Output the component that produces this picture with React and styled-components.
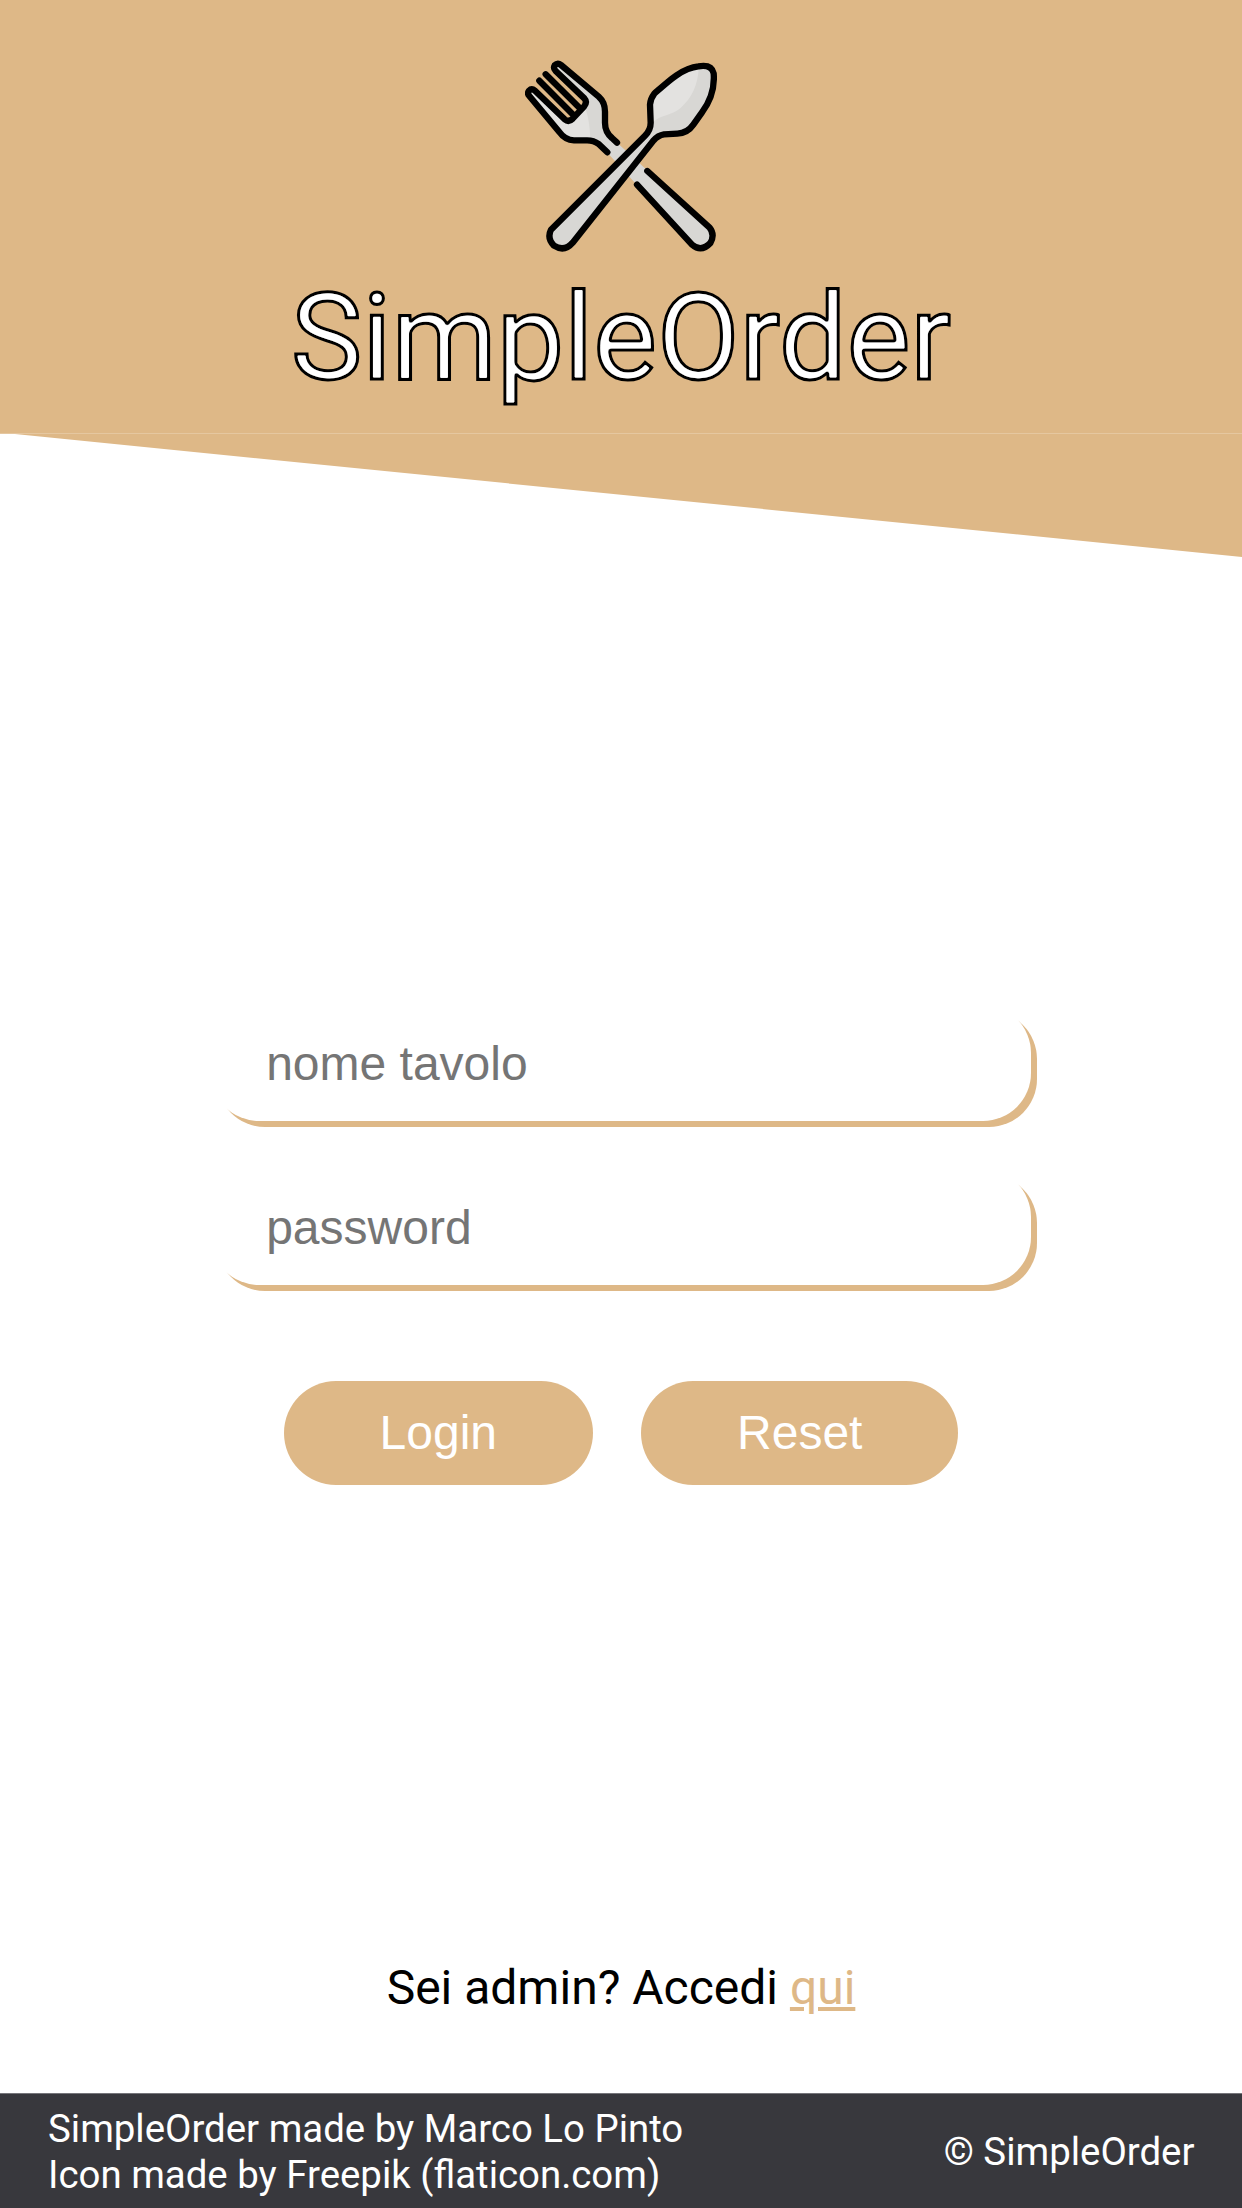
import React from "react";
import styled, { createGlobalStyle } from "styled-components";

const tan = "#deb887";

const GlobalStyle = createGlobalStyle`
  *, *::before, *::after { box-sizing: border-box; }
  body { margin: 0; background: #fff; font-family: Roboto, sans-serif; }
`;

const Page = styled.div`
  display: flex;
  flex-direction: column;
  width: 100%;
  min-height: 2208px;
`;

const Header = styled.header`
  display: flex;
  flex-direction: column;
  align-items: center;
  height: 434px;
  padding-top: 60px;
  background: linear-gradient(${tan} 433px, #e5c7a0 433px);
`;

const Logo = styled.svg`
  display: block;
  width: 192px;
  height: 192px;
`;

const Title = styled.h1`
  margin: 16px 0 0;
  font-size: 120px;
  font-weight: 400;
  line-height: 141px;
  color: #fff;
  -webkit-text-stroke: 3px #000;
  paint-order: stroke fill;
  filter: url(#title-outline);
`;

const FilterDefs = styled.svg`
  position: absolute;
  width: 0;
  height: 0;
`;

const Slant = styled.div`
  height: 123px;
  background: ${tan};
  clip-path: polygon(0 -1.5px, 100% -1.5px, 100% 100%);
`;

const Main = styled.main`
  flex: 1;
  display: flex;
  flex-direction: column;
  align-items: center;
  padding-top: 448px;
`;

const Form = styled.form`
  display: flex;
  flex-direction: column;
  align-items: center;
  gap: 48px;
  width: 66%;
`;

const Field = styled.input`
  width: 100%;
  height: 116px;
  padding: 0 55px;
  border: 0;
  border-radius: 48px;
  outline: none;
  background: #fff;
  box-shadow: 6px 6px 0 ${tan};
  font: 48px "Liberation Sans", Arial, sans-serif;
  &::placeholder { color: #757575; opacity: 1; }
`;

const Actions = styled.div`
  display: flex;
  gap: 48px;
  margin-top: 48px;
`;

const Button = styled.button`
  height: 104px;
  padding: 0 96px 2px;
  border: 0;
  border-radius: 52px;
  background: ${tan};
  color: #fff;
  font: 48px "Liberation Sans", Arial, sans-serif;
`;

const AdminText = styled.p`
  margin: auto 0 77px;
  font-size: 48px;
  line-height: 56px;
  color: #000;
`;

const AdminLink = styled.a`
  color: ${tan};
`;

const Footer = styled.footer`
  display: flex;
  justify-content: space-between;
  align-items: center;
  height: 115px;
  padding: 1px 47.5px 0 48px;
  border-top: 1px solid #75757a;
  background: #38383d;
  color: #fff;
  font-size: 38.4px;
  line-height: 46px;
`;

const Credits = styled.div`
  display: flex;
  flex-direction: column;
`;

// Shrinks the white fill so the black outline also covers the inner edge of each letter,
// without outlining the overlapping parts inside a glyph.
function TitleOutline() {
  return (
    <FilterDefs aria-hidden="true">
      <filter id="title-outline" x="-5%" y="-5%" width="110%" height="110%" colorInterpolationFilters="sRGB">
        <feColorMatrix in="SourceGraphic" type="matrix" values="0 0 0 0 1  0 0 0 0 1  0 0 0 0 1  1 0 0 0 0" />
        <feGaussianBlur stdDeviation="1.2" />
        <feComponentTransfer result="fill">
          <feFuncA type="linear" slope="6.6" intercept="-5.4" />
        </feComponentTransfer>
        <feMerge>
          <feMergeNode in="SourceAlpha" />
          <feMergeNode in="fill" />
        </feMerge>
      </filter>
    </FilterDefs>
  );
}

function Cutlery() {
  return (
    <Logo viewBox="45 30 576 576" fill="none" strokeLinecap="round" strokeLinejoin="round">
      <path fill="#d8d7d4" d="M144 41L265 139Q285 155 285 185V220Q285 245 305 263L600 533Q617 555 602 581Q574 609 546 585L290 306L266 283Q250 271 225 271H190Q166 269 148 248L56 132Q52 120 63 117L166 208Q177 220 190 207L221 176Q233 162 224 151L135 59Q131 45 144 41Z" />
      <path fill="#e3e2e0" d="M60 120L166 208Q177 220 190 207L227 178Q240 215 241 271H190Q166 269 148 248L54 128Z" />
      <g stroke="#000" strokeWidth="19">
        <path d="M321 278L306 264Q285 246 285 218V185Q285 157 266 140L153 45Q143 37 134 46Q129 54 137 63L223 145Q233 156 222 170L188 206Q176 218 164 208L75 122Q65 114 57 122Q51 130 58 138L148 246Q165 270 192 271H228Q250 270 266 282L292 307" />
        <path d="M107 73L212 177M88 92L191 196" />
        <path d="M412 363L598 532Q616 554 601 579Q574 608 546 584L381 404" />
      </g>
      <path fill="#d8d7d4" d="M123 539L405 257Q422 240 422 218L420 164Q421 147 433 131C470 98 515 54 565 49Q605 42 611 70C615 121 594 163 576 187L550 224Q532 250 502 251L462 253Q444 256 431 271L188 578Q163 607 132 587Q110 565 123 539Z" />
      <path fill="#e3e2e0" d="M429 217L426 171Q426 151 440 134C475 101 519 61 566 55C564 105 545 145 512 174C489 195 448 196 429 217Z" />
      <path stroke="#000" strokeWidth="19" d="M123 539L405 257Q422 240 422 218L420 164Q421 147 433 131C470 98 515 54 565 49Q605 42 611 70C615 121 594 163 576 187L550 224Q532 250 502 251L462 253Q444 256 431 271L188 578Q163 607 132 587Q110 565 123 539Z" />
    </Logo>
  );
}

export default function App() {
  return (
    <Page>
      <GlobalStyle />
      <TitleOutline />
      <Header>
        <Cutlery />
        <Title>SimpleOrder</Title>
      </Header>
      <Slant />
      <Main>
        <Form onSubmit={(e) => e.preventDefault()}>
          <Field type="text" placeholder="nome tavolo" />
          <Field type="password" placeholder="password" />
          <Actions>
            <Button type="submit">Login</Button>
            <Button type="reset">Reset</Button>
          </Actions>
        </Form>
        <AdminText>
          Sei admin? Accedi <AdminLink href="#">qui</AdminLink>
        </AdminText>
      </Main>
      <Footer>
        <Credits>
          <span>SimpleOrder made by Marco Lo Pinto</span>
          <span>Icon made by Freepik (flaticon.com)</span>
        </Credits>
        <span>© SimpleOrder</span>
      </Footer>
    </Page>
  );
}
